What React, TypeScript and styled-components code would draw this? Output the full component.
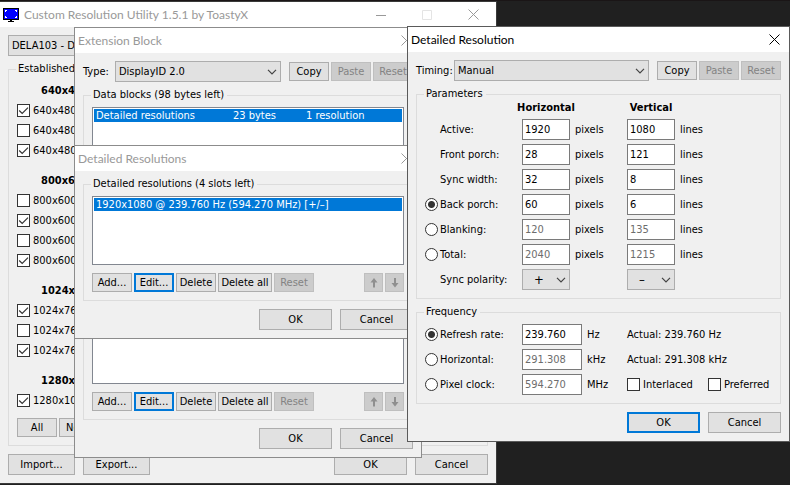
import React, { useId, useState } from "react";
import styled, { createGlobalStyle, css } from "styled-components";

const GlobalStyle = createGlobalStyle`
  *, *::before, *::after { box-sizing: border-box; }
  body {
    margin: 0;
    background: #202020;
    color: #000;
    font: 11px/14px "DejaVu Sans Condensed", "DejaVu Sans", Tahoma, sans-serif;
  }
  button, input, select { font: inherit; color: inherit; margin: 0; }
`;

/* ---------- desktop and windows ---------- */

const Desktop = styled.main`
  position: relative;
  min-height: 100vh;
  overflow: hidden;
  border-top: 1px solid #1a1516;
`;

const Frame = styled.section<{ $x: number; $y: number; $w: number; $edge: string }>`
  position: absolute;
  left: ${(p) => p.$x}px;
  top: ${(p) => p.$y}px;
  width: ${(p) => p.$w}px;
  border: 1px solid ${(p) => p.$edge};
  background: #f0f0f0;
`;

const TitleBar = styled.header<{ $active?: boolean; $main?: boolean }>`
  display: flex;
  align-items: center;
  height: 25px;
  padding: ${(p) => (p.$main ? "0 0 0 3px" : "0 3px")};
  background: #fff;
  color: ${(p) => (p.$active ? "#000" : "#999")};
  > svg { margin-right: 5px; }
`;

const Title = styled.h1`
  flex: 1;
  margin: 0;
  font: 400 12px/16px Lato, "Segoe UI", sans-serif;
  white-space: nowrap;
`;

const CaptionButton = styled.button<{ $wide?: boolean }>`
  display: flex;
  align-items: center;
  justify-content: center;
  width: ${(p) => (p.$wide ? 46 : 24)}px;
  height: 25px;
  padding: 0;
  border: 0;
  background: none;
  &:disabled { color: #e4e4e4; }
`;

const Body = styled.div`
  display: flex;
  flex-direction: column;
  padding: 8px;
`;

/* ---------- shared controls ---------- */

const Group = styled.fieldset<{ $gapTop?: number }>`
  min-width: 0;
  margin: ${(p) => p.$gapTop ?? 6}px 0 0;
  padding: 5px 8px 8px;
  border: 1px solid #dcdcdc;
`;

const Legend = styled.legend`
  margin-left: -1px;
  padding: 0 3px 0 2px;
  line-height: 14px;
  white-space: nowrap;
`;

const Row = styled.div<{ $gap?: number; $justify?: string; $top?: number }>`
  display: flex;
  align-items: center;
  justify-content: ${(p) => p.$justify ?? "flex-start"};
  gap: ${(p) => p.$gap ?? 8}px;
  margin-top: ${(p) => p.$top ?? 0}px;
`;

const Spacer = styled.span`
  flex: 1;
`;

const SelectLabel = styled.label<{ $w: number }>`
  width: ${(p) => p.$w}px;
  white-space: nowrap;
`;

const Button = styled.button<{ $w: number; $tall?: boolean; $default?: boolean }>`
  display: flex;
  align-items: center;
  justify-content: center;
  flex: none;
  width: ${(p) => p.$w}px;
  height: ${(p) => (p.$tall ? 21 : 19)}px;
  padding: 0;
  background: #e1e1e1;
  border: ${(p) => (p.$default ? "2px solid #0078d7" : "1px solid #adadad")};
  white-space: nowrap;
  &:disabled {
    background: #ccc;
    border-color: #bfbfbf;
    color: #838383;
  }
`;

const SelectBox = styled.span<{ $w?: number }>`
  display: grid;
  align-items: center;
  height: 21px;
  ${(p) => (p.$w ? css`width: ${p.$w}px;` : css`flex: 1;`)}
  > select, > svg { grid-area: 1 / 1; }
  > svg { justify-self: end; margin-right: 4px; pointer-events: none; }
`;

const NativeSelect = styled.select<{ $sign?: boolean }>`
  appearance: none;
  width: 100%;
  height: 21px;
  padding: 0 18px 0 ${(p) => (p.$sign ? 11 : 3)}px;
  border: 1px solid #adadad;
  border-radius: 0;
  background: #e1e1e1;
  font-size: ${(p) => (p.$sign ? 13 : 11)}px;
`;

const ListBox = styled.ul<{ $h: number }>`
  height: ${(p) => p.$h}px;
  margin: 0;
  padding: 1px;
  border: 1px solid #828790;
  background: #fff;
  list-style: none;
`;

const ListItem = styled.li`
  display: flex;
  height: 13px;
  padding-left: 2px;
  background: #0078d7;
  color: #fff;
  line-height: 14px;
  white-space: nowrap;
`;

const Cell = styled.span<{ $w?: number }>`
  width: ${(p) => (p.$w ? `${p.$w}px` : "auto")};
`;

const CheckLabel = styled.label`
  display: flex;
  align-items: flex-start;
  gap: 3px;
  height: 20px;
  padding-top: 3px;
  white-space: nowrap;
`;

const TickHolder = styled.span`
  display: grid;
  width: 13px;
  height: 13px;
  > * { grid-area: 1 / 1; }
  > svg { pointer-events: none; visibility: hidden; }
  > input:checked + svg { visibility: visible; }
`;

const NativeCheck = styled.input`
  appearance: none;
  width: 13px;
  height: 13px;
  border: 1px solid #333;
  background: #fff;
`;

const NativeRadio = styled.input`
  appearance: none;
  flex: none;
  width: 13px;
  height: 13px;
  border: 1px solid #333;
  border-radius: 50%;
  background: #fff;
  &:checked { background: radial-gradient(circle, #333 3px, #fff 4px); }
`;

const TextInput = styled.input<{ $w: number; $muted?: boolean }>`
  width: ${(p) => p.$w}px;
  height: 21px;
  padding: 0 2px;
  border: 1px solid #7a7a7a;
  border-radius: 0;
  background: #fff;
  color: ${(p) => (p.$muted ? "#6d6d6d" : "#000")};
`;

/* ---------- drawings ---------- */

const MonitorIcon = () => (
  <svg width="16" height="16" viewBox="0 0 16 16" shapeRendering="crispEdges" aria-hidden="true">
    <rect x="0" y="1" width="16" height="12" fill="#000" />
    <rect x="1" y="2" width="14" height="10" fill="#00f" />
    <path d="M2 3h2v1H3v1H2zM12 3h2v2h-1V4h-1zM2 9h1v1h1v1H2zM13 9h1v2h-2v-1h1z" fill="#fff" />
    <path d="M7 13h2v1h2v1H5v-1h2z" fill="#000" />
  </svg>
);

const CloseIcon = () => (
  <svg width="11" height="11" viewBox="0 0 11 11" fill="none" stroke="currentColor" aria-hidden="true">
    <path d="M.5 .5l10 10M10.5 .5l-10 10" />
  </svg>
);

const MinimizeIcon = () => (
  <svg width="10" height="10" viewBox="0 0 10 10" fill="none" stroke="currentColor" aria-hidden="true">
    <path d="M0 5.5h10" />
  </svg>
);

const MaximizeIcon = () => (
  <svg width="10" height="10" viewBox="0 0 10 10" fill="none" stroke="currentColor" aria-hidden="true">
    <path d="M.5 .5h9v9h-9z" />
  </svg>
);

const Chevron = () => (
  <svg width="10" height="6" viewBox="0 0 10 6" fill="none" stroke="#444" strokeWidth="1.2" aria-hidden="true">
    <path d="M1 .8l4 4 4-4" />
  </svg>
);

const Tick = () => (
  <svg width="13" height="13" viewBox="0 0 13 13" fill="none" stroke="#333" strokeWidth="1.2" aria-hidden="true">
    <path d="M2.2 6.5l3 3 5.8-5.8" />
  </svg>
);

const Arrow = ({ down }: { down?: boolean }) => (
  <svg width="8" height="10" viewBox="0 0 8 10" fill="#8f8f8f" aria-hidden="true">
    <path d={down ? "M3 0h2v5h2.5L4 9.5.5 5H3z" : "M3 9.5h2v-5h2.5L4 0 .5 4.5H3z"} />
  </svg>
);

/* ---------- composed controls ---------- */

type SelectProps = { label: string; id?: string; options: string[]; w?: number; sign?: boolean };

const Select = ({ label, id, options, w, sign }: SelectProps) => (
  <SelectBox $w={w}>
    <NativeSelect id={id} aria-label={label} $sign={sign}>
      {options.map((o) => (
        <option key={o}>{o}</option>
      ))}
    </NativeSelect>
    <Chevron />
  </SelectBox>
);

const Check = ({ text, on }: { text: string; on?: boolean }) => (
  <CheckLabel>
    <TickHolder>
      <NativeCheck type="checkbox" defaultChecked={on} />
      <Tick />
    </TickHolder>
    {text}
  </CheckLabel>
);

const CopyButtons = () => (
  <Row $gap={2}>
    <Button $w={40}>Copy</Button>
    <Button $w={40} disabled>Paste</Button>
    <Button $w={40} disabled>Reset</Button>
  </Row>
);

const ListButtons = () => (
  <Row $gap={2} $top={8}>
    <Button $w={40}>Add...</Button>
    <Button $w={40} $default>Edit...</Button>
    <Button $w={40}>Delete</Button>
    <Button $w={54}>Delete all</Button>
    <Button $w={40} disabled>Reset</Button>
    <Spacer />
    <Button $w={19} disabled aria-label="Move up"><Arrow /></Button>
    <Button $w={19} disabled aria-label="Move down"><Arrow down /></Button>
  </Row>
);

const DialogButtons = ({ primary }: { primary?: boolean }) => (
  <Row $justify="flex-end" $top={8}>
    <Button $w={73} $tall $default={primary}>OK</Button>
    <Button $w={73} $tall>Cancel</Button>
  </Row>
);

const CloseButton = ({ wide }: { wide?: boolean }) => (
  <CaptionButton $wide={wide} aria-label="Close"><CloseIcon /></CaptionButton>
);

/* ---------- main window ---------- */

const ModeBlock = styled.div`
  margin-bottom: 10px;
`;

const ModeHeading = styled.h2`
  margin: 0 0 0 24px;
  font-size: 11px;
  line-height: 20px;
`;

const ModeList = styled.div`
  > :last-child { margin-bottom: 7px; }
`;

const modes: { name: string; rates: [number, boolean][] }[] = [
  { name: "640x480", rates: [[60, true], [72, false], [75, true]] },
  { name: "800x600", rates: [[56, false], [60, true], [72, false], [75, true]] },
  { name: "1024x768", rates: [[60, true], [70, false], [75, true]] },
  { name: "1280x1024", rates: [[75, true]] },
];

const MainWindow = () => (
  <Frame $x={-1} $y={0} $w={498} $edge="#3a3a3a">
    <TitleBar $main>
      <MonitorIcon />
      <Title>Custom Resolution Utility 1.5.1 by ToastyX</Title>
      <CaptionButton $wide aria-label="Minimize"><MinimizeIcon /></CaptionButton>
      <CaptionButton $wide disabled aria-label="Maximize"><MaximizeIcon /></CaptionButton>
      <CloseButton wide />
    </TitleBar>
    <Body>
      <Row>
        <Select label="Display" options={["DELA103 - DELL"]} />
      </Row>
      <Group>
        <Legend>Established resolutions</Legend>
        <ModeList>
          {modes.map((m) => (
            <ModeBlock key={m.name}>
              <ModeHeading>{m.name}</ModeHeading>
              {m.rates.map(([hz, on]) => (
                <Check key={hz} text={`${m.name} @ ${hz} Hz`} on={on} />
              ))}
            </ModeBlock>
          ))}
        </ModeList>
        <Row $gap={2}>
          <Button $w={40}>All</Button>
          <Button $w={40}>None</Button>
        </Row>
      </Group>
      <Row $top={8}>
        <Button $w={67} $tall>Import...</Button>
        <Button $w={67} $tall>Export...</Button>
        <Spacer />
        <Button $w={73} $tall>OK</Button>
        <Button $w={73} $tall>Cancel</Button>
      </Row>
    </Body>
  </Frame>
);

/* ---------- extension block ---------- */

const ExtensionWindow = () => (
  <Frame $x={74} $y={26} $w={348} $edge="#8c8c8c">
    <TitleBar>
      <Title>Extension Block</Title>
      <CloseButton />
    </TitleBar>
    <Body>
      <Row $justify="space-between">
        <Row $gap={0}>
          <SelectLabel $w={32} htmlFor="block-type">Type:</SelectLabel>
          <Select id="block-type" label="Type" options={["DisplayID 2.0", "CEA-861"]} w={166} />
        </Row>
        <CopyButtons />
      </Row>
      <Group>
        <Legend>Data blocks (98 bytes left)</Legend>
        <ListBox $h={277}>
          <ListItem>
            <Cell $w={137}>Detailed resolutions</Cell>
            <Cell $w={73}>23 bytes</Cell>
            <Cell>1 resolution</Cell>
          </ListItem>
        </ListBox>
        <ListButtons />
      </Group>
      <DialogButtons />
    </Body>
  </Frame>
);

/* ---------- detailed resolutions ---------- */

const ResolutionsWindow = () => (
  <Frame $x={74} $y={144} $w={348} $edge="#8c8c8c">
    <TitleBar>
      <Title>Detailed Resolutions</Title>
      <CloseButton />
    </TitleBar>
    <Body>
      <Group $gapTop={-2}>
        <Legend>Detailed resolutions (4 slots left)</Legend>
        <ListBox $h={69}>
          <ListItem>1920x1080 @ 239.760 Hz (594.270 MHz) [+/–]</ListItem>
        </ListBox>
        <ListButtons />
      </Group>
      <DialogButtons />
    </Body>
  </Frame>
);

/* ---------- detailed resolution ---------- */

const ParamGrid = styled.div`
  display: grid;
  grid-template-columns: 97px 53px 52px 53px 1fr;
  grid-auto-rows: 21px;
  row-gap: 4px;
  align-items: center;
`;

const HeaderGrid = styled.div`
  display: grid;
  grid-template-columns: 92px 58px 47px 58px 1fr;
  margin: -5px 0 4px;
  font-weight: 700;
  text-align: center;
  > :nth-child(1) { grid-column: 2; }
  > :nth-child(2) { grid-column: 4; }
`;

const FreqGrid = styled(ParamGrid)`
  grid-template-columns: 97px 65px 40px 81px 1fr;
`;

const FieldLabel = styled.label<{ $plain?: boolean }>`
  display: flex;
  align-items: center;
  gap: 2px;
  padding-left: ${(p) => (p.$plain ? 15 : 0)}px;
  white-space: nowrap;
`;

const Output = styled.output`
  grid-column: 4 / 6;
`;

type Param = { name: string; h: string; v: string; mode?: string };

const params: Param[] = [
  { name: "Active", h: "1920", v: "1080" },
  { name: "Front porch", h: "28", v: "121" },
  { name: "Sync width", h: "32", v: "8" },
  { name: "Back porch", h: "60", v: "6", mode: "back" },
  { name: "Blanking", h: "120", v: "135", mode: "blank" },
  { name: "Total", h: "2040", v: "1215", mode: "total" },
];

const freqs = [
  { name: "Refresh rate", value: "239.760", unit: "Hz", actual: "Actual: 239.760 Hz" },
  { name: "Horizontal", value: "291.308", unit: "kHz", actual: "Actual: 291.308 kHz" },
  { name: "Pixel clock", value: "594.270", unit: "MHz" },
];

const TimingWindow = () => {
  const id = useId();
  const [mode, setMode] = useState("back");
  const [freq, setFreq] = useState("Refresh rate");

  return (
    <Frame $x={407} $y={25} $w={383} $edge="#5a5a5a">
      <TitleBar $active>
        <Title>Detailed Resolution</Title>
        <CloseButton />
      </TitleBar>
      <Body>
        <Row $justify="space-between">
          <Row $gap={0}>
            <SelectLabel $w={38} htmlFor={`${id}-timing`}>Timing:</SelectLabel>
            <Select
              id={`${id}-timing`}
              label="Timing"
              options={["Manual", "Automatic PC", "Automatic HDTV"]}
              w={195}
            />
          </Row>
          <CopyButtons />
        </Row>

        <Group>
          <Legend>Parameters</Legend>
          <HeaderGrid>
            <span>Horizontal</span>
            <span>Vertical</span>
          </HeaderGrid>
          <ParamGrid>
            {params.map((p) => {
              const muted = p.mode !== undefined && p.mode !== mode;
              const fieldId = `${id}-${p.name}`;
              return (
                <React.Fragment key={p.name}>
                  <FieldLabel $plain={!p.mode} htmlFor={fieldId}>
                    {p.mode && (
                      <NativeRadio
                        id={fieldId}
                        type="radio"
                        name={`${id}-mode`}
                        checked={mode === p.mode}
                        onChange={() => setMode(p.mode!)}
                      />
                    )}
                    {p.name}:
                  </FieldLabel>
                  <TextInput
                    id={p.mode ? undefined : fieldId}
                    $w={48}
                    $muted={muted}
                    defaultValue={p.h}
                    aria-label={`${p.name}, horizontal`}
                  />
                  <span>pixels</span>
                  <TextInput $w={48} $muted={muted} defaultValue={p.v} aria-label={`${p.name}, vertical`} />
                  <span>lines</span>
                </React.Fragment>
              );
            })}
            <FieldLabel $plain htmlFor={`${id}-polarity`}>Sync polarity:</FieldLabel>
            <Select id={`${id}-polarity`} label="Horizontal sync polarity" options={["+", "–"]} w={48} sign />
            <span />
            <Select label="Vertical sync polarity" options={["–", "+"]} w={48} sign />
          </ParamGrid>
        </Group>

        <Group>
          <Legend>Frequency</Legend>
          <FreqGrid>
            {freqs.map((f) => (
              <React.Fragment key={f.name}>
                <FieldLabel>
                  <NativeRadio
                    type="radio"
                    name={`${id}-freq`}
                    checked={freq === f.name}
                    onChange={() => setFreq(f.name)}
                  />
                  {f.name}:
                </FieldLabel>
                <TextInput $w={60} $muted={freq !== f.name} defaultValue={f.value} aria-label={`${f.name} value`} />
                <span>{f.unit}</span>
                {f.actual ? (
                  <Output>{f.actual}</Output>
                ) : (
                  <>
                    <Check text="Interlaced" />
                    <Check text="Preferred" />
                  </>
                )}
              </React.Fragment>
            ))}
          </FreqGrid>
        </Group>
        <DialogButtons primary />
      </Body>
    </Frame>
  );
};

export default function App() {
  return (
    <Desktop>
      <GlobalStyle />
      <MainWindow />
      <ExtensionWindow />
      <ResolutionsWindow />
      <TimingWindow />
    </Desktop>
  );
}
